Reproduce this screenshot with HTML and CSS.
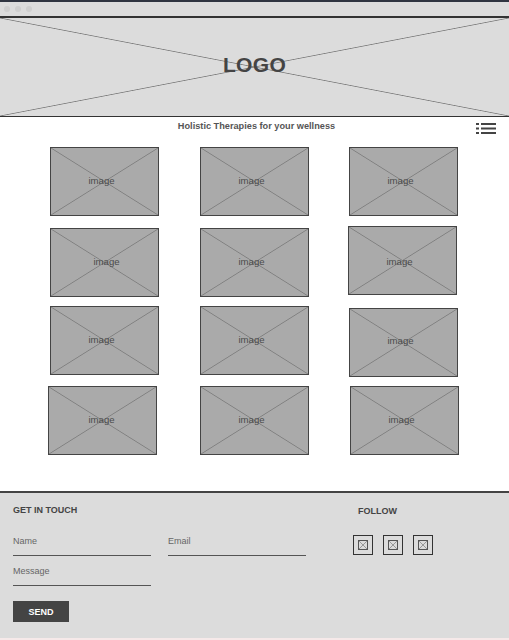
FILE: index.html
```html
<!DOCTYPE html>
<html>
<head>
<meta charset="utf-8">
<link rel="stylesheet" href="styles.css">
</head>
<body>
<div class="browser-bar">
  <span class="dot"></span><span class="dot"></span><span class="dot"></span>
</div>
<header class="logo-box x-fill">
  <span class="logo">LOGO</span>
</header>
<div class="tagline-row">
  <span class="tagline">Holistic Therapies for your wellness</span>
  <svg class="menu" width="20" height="11" viewBox="0 0 20 11">
    <rect x="0" y="0" width="3" height="2" fill="#444"/>
    <rect x="5" y="0" width="15" height="2" fill="#444"/>
    <rect x="0" y="4.5" width="3" height="2" fill="#444"/>
    <rect x="5" y="4.5" width="15" height="2" fill="#444"/>
    <rect x="0" y="9" width="3" height="2" fill="#444"/>
    <rect x="5" y="9" width="15" height="2" fill="#444"/>
  </svg>
</div>
<main class="grid">
  <div class="img x-fill">image</div>
  <div class="img x-fill">image</div>
  <div class="img x-fill left1">image</div>
  <div class="img x-fill text-right">image</div>
  <div class="img x-fill">image</div>
  <div class="img x-fill up2 left2">image</div>
  <div class="img x-fill">image</div>
  <div class="img x-fill">image</div>
  <div class="img x-fill down2 left1">image</div>
  <div class="img x-fill left2 text-shift">image</div>
  <div class="img x-fill">image</div>
  <div class="img x-fill">image</div>
</main>
<footer class="footer">
  <section class="contact">
    <h2 class="heading">GET IN TOUCH</h2>
    <div class="fields">
      <div class="field"><span class="label">Name</span><span class="line"></span></div>
      <div class="field"><span class="label">Email</span><span class="line"></span></div>
      <div class="field"><span class="label">Message</span><span class="line"></span></div>
    </div>
    <button class="send">SEND</button>
  </section>
  <section class="follow">
    <h2 class="heading">FOLLOW</h2>
    <div class="socials">
      <span class="social"><span class="mini x-fill-small"></span></span>
      <span class="social"><span class="mini x-fill-small"></span></span>
      <span class="social"><span class="mini x-fill-small"></span></span>
    </div>
  </section>
</footer>
<div class="bottom-strip"></div>
</body>
</html>
```
FILE: styles.css
```css
* { box-sizing: border-box; }
html, body { margin: 0; padding: 0; background: #fff; }
body {
  font-family: "Liberation Sans", Arial, sans-serif;
  color: #444;
  width: 509px;
  height: 640px;
  overflow: hidden;
}
.browser-bar {
  height: 16px;
  background: #dcdcdc;
  border-top: 2px solid #2f3440;
  display: flex;
  align-items: center;
  gap: 5px;
  padding-left: 4px;
}
.dot {
  width: 6px; height: 6px;
  border-radius: 50%;
  background: #cfcfcf;
}
.x-fill {
  background-color: #dcdcdc;
  background-image:
    linear-gradient(to top right, transparent calc(50% - 0.8px), #808080 50%, transparent calc(50% + 0.8px)),
    linear-gradient(to bottom right, transparent calc(50% - 0.8px), #808080 50%, transparent calc(50% + 0.8px));
}
.logo-box {
  height: 101px;
  border-top: 2px solid #333;
  border-bottom: 1px solid #333;
  display: flex;
  align-items: center;
  justify-content: center;
}
.logo {
  font-size: 21px;
  font-weight: bold;
  color: #444;
  letter-spacing: 0.3px;
  margin-top: -5px;
}
.tagline-row {
  height: 30px;
  display: flex;
  align-items: flex-start;
  justify-content: center;
  position: relative;
  padding-top: 4px;
}
.tagline {
  font-size: 9.2px;
  font-weight: bold;
  color: #555;
  margin-left: 4px;
}
.menu {
  position: absolute;
  right: 13px;
  top: 6px;
}
.grid {
  display: grid;
  grid-template-columns: repeat(3, 109px);
  grid-template-rows: 81px 78px 80px 69px;
  align-content: start;
  align-items: start;
  column-gap: 41px;
  row-gap: 0;
  padding-left: 50px;
  height: 344px;
}
.img {
  width: 109px;
  height: 69px;
  background-color: #aaa;
  border: 1px solid #444;
  display: flex;
  align-items: center;
  justify-content: center;
  padding: 0 6px 2px 0;
  font-size: 9.6px;
  color: #4a4a4a;
}
.text-right { padding: 0 0 2px 4px; }
.text-shift { padding: 0 2px 2px 0; }
.up2 { margin-top: -2px; padding-top: 1px; padding-bottom: 0; }
.down2 { margin-top: 2px; padding-bottom: 4px; }
.left1 { margin-left: -1px; }
.left2 { margin-left: -2px; }
.footer {
  border-top: 2px solid #444;
  background: #dcdcdc;
  height: 147px;
  display: flex;
  padding: 11px 13px 0 13px;
}
.contact { width: 340px; }
.heading {
  margin: 0;
  font-size: 9px;
  font-weight: bold;
  color: #444;
  line-height: 12px;
}
.fields {
  display: grid;
  grid-template-columns: 138px 138px;
  column-gap: 17px;
  row-gap: 9px;
  margin-top: 19px;
}
.field { display: flex; flex-direction: column; }
.label {
  font-size: 9px;
  color: #666;
  line-height: 12px;
}
.line {
  height: 1px;
  background: #555;
  margin-top: 8px;
}
.send {
  margin-top: 15px;
  width: 56px;
  height: 21px;
  border: none;
  background: #444;
  color: #fff;
  font-family: "Liberation Sans", Arial, sans-serif;
  font-size: 9px;
  font-weight: bold;
  padding: 0;
}
.follow {
  display: flex;
  flex-direction: column;
}
.follow .heading { margin-left: 5px; margin-top: 1px; }
.socials {
  display: flex;
  gap: 10px;
  margin-top: 18px;
}
.social {
  width: 20px;
  height: 20px;
  border: 1.5px solid #333;
  display: flex;
  align-items: center;
  justify-content: center;
}
.mini {
  width: 10px;
  height: 10px;
  border: 1px solid #555;
}
.x-fill-small {
  background-color: #dcdcdc;
  background-image:
    linear-gradient(to top right, transparent calc(50% - 0.6px), #999 50%, transparent calc(50% + 0.6px)),
    linear-gradient(to bottom right, transparent calc(50% - 0.6px), #999 50%, transparent calc(50% + 0.6px));
}
.bottom-strip {
  height: 4px;
  background: #f6e9e9;
}
```
